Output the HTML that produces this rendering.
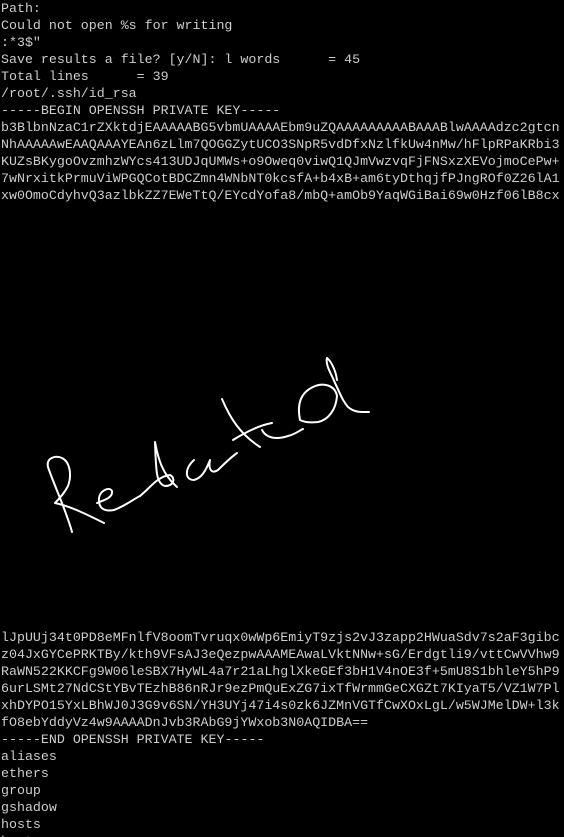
<!DOCTYPE html>
<html><head><meta charset="utf-8"><style>
html,body{margin:0;padding:0;background:#000;width:564px;height:837px;overflow:hidden}
pre{margin:0;padding:0 0 0 1px;font-family:"Liberation Mono","DejaVu Sans Mono",monospace;font-size:13.3px;line-height:17px;color:#cdcdcd;white-space:pre}
svg{position:absolute;left:0;top:0}
</style></head><body>
<pre>Path:
Could not open %s for writing
:*3$"
Save results a file? [y/N]: l words      = 45
Total lines      = 39
/root/.ssh/id_rsa
-----BEGIN OPENSSH PRIVATE KEY-----
b3BlbnNzaC1rZXktdjEAAAAABG5vbmUAAAAEbm9uZQAAAAAAAAABAAABlwAAAAdzc2gtcn
NhAAAAAwEAAQAAAYEAn6zLlm7QOGGZytUCO3SNpR5vdDfxNzlfkUw4nMw/hFlpRPaKRbi3
KUZsBKygoOvzmhzWYcs413UDJqUMWs+o9Oweq0viwQ1QJmVwzvqFjFNSxzXEVojmoCePw+
7wNrxitkPrmuViWPGQCotBDCZmn4WNbNT0kcsfA+b4xB+am6tyDthqjfPJngROf0Z26lA1
xw0OmoCdyhvQ3azlbkZZ7EWeTtQ/EYcdYofa8/mbQ+amOb9YaqWGiBai69w0Hzf06lB8cx

























lJpUUj34t0PD8eMFnlfV8oomTvruqx0wWp6EmiyT9zjs2vJ3zapp2HWuaSdv7s2aF3gibc
z04JxGYCePRKTBy/kth9VFsAJ3eQezpwAAAMEAwaLVktNNw+sG/Erdgtli9/vttCwVVhw9
RaWN522KKCFg9W06leSBX7HyWL4a7r21aLhglXkeGEf3bH1V4nOE3f+5mU8S1bhleY5hP9
6urLSMt27NdCStYBvTEzhB86nRJr9ezPmQuExZG7ixTfWrmmGeCXGZt7KIyaT5/VZ1W7Pl
xhDYPO15YxLBhWJ0J3G9v6SN/YH3UYj47i4s0zk6JZMnVGTfCwXOxLgL/w5WJMelDW+l3k
fO8ebYddyVz4w9AAAADnJvb3RAbG9jYWxob3N0AQIDBA==
-----END OPENSSH PRIVATE KEY-----
aliases
ethers
group
gshadow
hosts
hosts</pre>
<svg width="564" height="837" viewBox="0 0 564 837" fill="none" stroke="#fff" stroke-width="2" stroke-linecap="round" stroke-linejoin="round">
<path d="M72 532 C66 510 54 485 48 467 C46 458 55 455 62 458 C70 462 72 475 68 486 C64 494 58 500 55 503 C70 506 88 515 104 523"/>
<path d="M97 503 C104 500 113 498 112 491 C109 486 100 491 99 498 C98 508 104 512 114 510 C125 506 132 500 140 496"/>
<path d="M140 496 C150 488 158 476 170 475 C176 478 174 486 165 486 C156 484 156 470 155 442 C158 458 162 474 177 487"/>
<path d="M194 460 C185 468 184 480 194 480 C202 478 206 470 210 460 C208 470 212 474 218 470 C224 464 230 458 237 453"/>
<path d="M222 399 C230 418 240 434 260 447"/>
<path d="M233 440 C246 432 260 425 272 423"/>
<path d="M262 430 C266 438 276 440 288 436 C296 434 300 430 303 429"/>
<path d="M300 420 C297 405 300 393 313 387 C323 382 335 385 337 396 C336 410 328 420 318 422 C310 423 304 422 300 420"/>
<path d="M327 358 C325 365 332 375 335 383 C340 393 342 400 348 407 C355 413 362 412 369 412"/>
<path d="M327 358 C332 362 336 372 337 380"/>
</svg>
</body></html>
